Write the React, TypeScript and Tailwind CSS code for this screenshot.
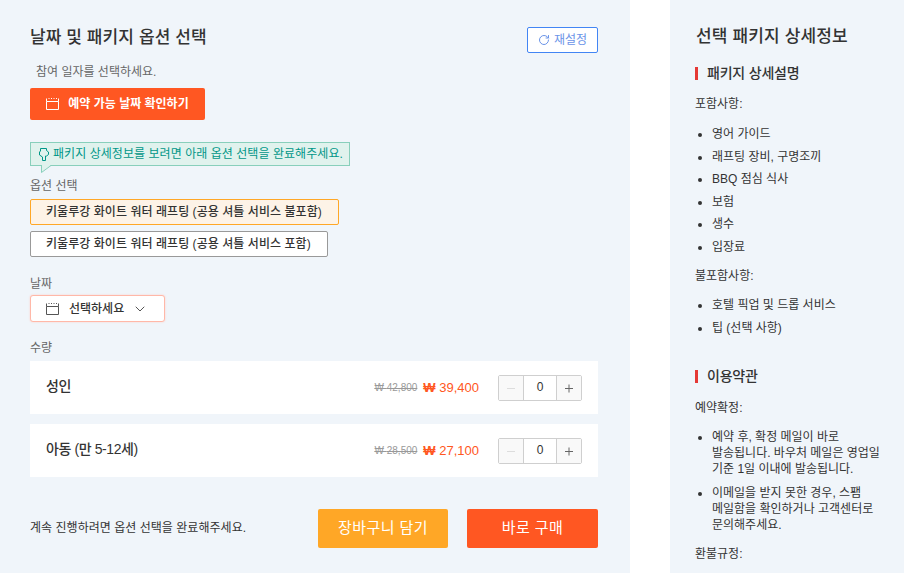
import { RotateCw, ChevronDown } from "lucide-react";

const font = "font-['Liberation_Sans','Noto_Sans_CJK_KR',sans-serif]";

function CalendarIcon({ className }: { className: string }) {
  return (
    <svg viewBox="0 0 13 12" className={className} fill="none" stroke="currentColor" strokeWidth="1">
      <path d="M0.500 3.500h12v8h-12zM0.500 3.500v-3M12.500 3.500v-3M2.500 0.500h1M5 0.500h1M7.500 0.500h1M10 0.500h1" />
    </svg>
  );
}

function HandIcon() {
  return (
    <svg viewBox="0 0 11 13" className="h-[13px] w-[11px] shrink-0" fill="none" stroke="currentColor" strokeWidth="1">
      <path d="M2.500 0.500h6v2l2 1.500v2.500l-2 1.500h-1v4.500h-3v-3.500l-3-2v-3l1-1z" />
    </svg>
  );
}

function Stepper() {
  return (
    <div className="flex h-[26px] w-[84px] rounded-[2px] border border-[#cfcfcf] text-[#666]">
      <div className="flex w-[24px] items-center justify-center bg-[#f9f9f9] text-[#ddd]">
        <svg viewBox="0 0 10 10" className="h-[10px] w-[10px]" stroke="currentColor"><path d="M1 5.500h8" /></svg>
      </div>
      <div className="flex w-[34px] items-center justify-center border-x border-[#cfcfcf] bg-white pb-[1px] text-[12px] text-[#333]">0</div>
      <div className="flex w-6 items-center justify-center bg-[#f9f9f9]">
        <svg viewBox="0 0 10 10" className="h-[10px] w-[10px]" stroke="currentColor"><path d="M1 5.500h8M5 1.500v8" /></svg>
      </div>
    </div>
  );
}

function QtyRow({ label, was, now }: { label: string; was: string; now: string }) {
  return (
    <div className="flex h-[53px] items-center justify-between bg-white px-4">
      <span className="pb-[2px] text-[14px] font-medium tracking-[-0.4px] text-[#333]">{label}</span>
      <div className="flex items-center">
        <span className="text-[10px] text-[#999] line-through">₩ {was}</span>
        <span className="ml-[6px] text-[13px] text-[#ff5722]"><b>₩</b> {now}</span>
        <div className="ml-[19px]"><Stepper /></div>
      </div>
    </div>
  );
}

function SideHeading({ children }: { children: string }) {
  return (
    <h3 className="border-l-[3px] border-[#e53935] pl-[9px] text-[14px] leading-[13px] font-medium tracking-[-0.2px] text-[#333]">{children}</h3>
  );
}

function SideList({ items }: { items: string[] }) {
  return (
    <ul className="flex list-disc flex-col gap-[3.6px] pl-[17px] text-[12px] leading-[19px] text-[#333]">
      {items.map((item) => (
        <li key={item}>{item}</li>
      ))}
    </ul>
  );
}

export default function App() {
  return (
    <div className={`${font} flex h-[573px] w-[904px] overflow-hidden bg-white`}>
      <main className="h-full w-[630px] bg-[#f0f5fa] pt-[27px] pr-8 pl-[30px]">
        <div className="flex items-start justify-between">
          <h2 className="mt-[2px] text-[17px] leading-[18px] font-medium tracking-[0.1px] text-[#333]">날짜 및 패키지 옵션 선택</h2>
          <button className="flex h-[26px] w-[71px] items-center justify-center gap-1 rounded-[2px] border border-[#4285f4] bg-white text-[12px] text-[#6b94e8]">
            <RotateCw size={12} />
            재설정
          </button>
        </div>
        <p className="mt-[11px] pl-[6px] text-[12px] leading-[16px] text-[#666]">참여 일자를 선택하세요.</p>
        <button className="mt-2 flex h-8 w-[175px] items-center justify-center gap-[9px] rounded-[2px] bg-[#ff5722] text-[12px] font-bold text-white">
          <CalendarIcon className="h-3 w-[13px]" />
          예약 가능 날짜 확인하기
        </button>

        <div className="relative mt-[22px] flex h-6 w-[320px] items-center gap-1 border border-[#88cfbb] bg-[#e0f2ed] pl-[7px] text-[12px] tracking-[0.05px] text-[#009688]">
          <HandIcon />
          패키지 상세정보를 보려면 아래 옵션 선택을 완료해주세요.
          <svg viewBox="0 0 11 8" className="absolute top-[22px] left-[10px] h-2 w-[11px]">
            <path d="M0.500 0v7.500L10 0z" fill="#e0f2ed" stroke="none" />
            <path d="M0.500 0v7.500L10 0.500" fill="none" stroke="#88cfbb" />
          </svg>
        </div>

        <p className="mt-[10px] text-[12px] leading-[20px] text-[#666]">옵션 선택</p>
        <div className="mt-[3px] flex flex-col items-start gap-[6px]">
          <div className="flex h-[26px] w-[309px] items-center rounded-[2px] border border-[#ffa726] bg-[#fdf3e7] pl-[15px] text-[12px] font-medium tracking-[0.05px] text-[#333]">
            키울루강 화이트 워터 래프팅 (공용 셔틀 서비스 불포함)
          </div>
          <div className="flex h-[26px] w-[298px] items-center rounded-[2px] border border-[#999] bg-white pl-[15px] text-[12px] font-medium tracking-[0.05px] text-[#333]">
            키울루강 화이트 워터 래프팅 (공용 셔틀 서비스 포함)
          </div>
        </div>

        <p className="mt-[17px] text-[12px] leading-[20px] text-[#666]">날짜</p>
        <button className="mt-[1px] flex h-[27px] w-[135px] items-center rounded-[3px] border border-[#ffb8a8] bg-white pl-[15px] text-[12px] font-medium text-[#333] shadow-[0_0_2px_#ffcfc4]">
          <CalendarIcon className="h-3 w-[13px] text-[#555]" />
          <span className="ml-[10px]">선택하세요</span>
          <ChevronDown size={16} strokeWidth={1.5} className="ml-2 text-[#555]" />
        </button>

        <p className="mt-4 text-[12px] leading-[20px] text-[#666]">수량</p>
        <div className="mt-[3px] flex flex-col gap-[10px]">
          <QtyRow label="성인" was="42,800" now="39,400" />
          <QtyRow label="아동 (만 5-12세)" was="28,500" now="27,100" />
        </div>

        <div className="mt-8 flex items-center">
          <p className="flex-1 pb-[2px] text-[12px] tracking-[0.03px] text-[#333]">계속 진행하려면 옵션 선택을 완료해주세요.</p>
          <button className="h-[39px] w-[130px] rounded-[2px] bg-[#ffa726] text-[15px] tracking-[0.4px] text-white">장바구니 담기</button>
          <button className="ml-[19px] h-[39px] w-[131px] rounded-[2px] bg-[#ff5722] text-[15px] tracking-[0.4px] text-white">바로 구매</button>
        </div>
      </main>

      <aside className="ml-10 h-full w-[234px] overflow-hidden bg-[#f0f5fa] pt-[27px] pl-[25px]">
        <h2 className="pl-[1px] text-[17px] leading-[20px] font-medium tracking-[0.15px] text-[#333]">선택 패키지 상세정보</h2>
        <div className="mt-5"><SideHeading>패키지 상세설명</SideHeading></div>
        <p className="mt-4 text-[12px] leading-[16px] text-[#333]">포함사항:</p>
        <div className="mt-[13px]">
          <SideList items={["영어 가이드", "래프팅 장비, 구명조끼", "BBQ 점심 식사", "보험", "생수", "입장료"]} />
        </div>
        <p className="mt-[11px] text-[12px] leading-[16px] text-[#333]">불포함사항:</p>
        <div className="mt-3">
          <SideList items={["호텔 픽업 및 드롭 서비스", "팁 (선택 사항)"]} />
        </div>
        <div className="mt-8"><SideHeading>이용약관</SideHeading></div>
        <p className="mt-[17px] text-[12px] leading-[16px] text-[#333]">예약확정:</p>
        <ul className="mt-[13px] flex w-[190px] list-disc flex-col gap-2 pl-[17px] text-[12px] leading-[16px] break-keep text-[#333]">
          <li>예약 후, 확정 메일이 바로 발송됩니다. 바우처 메일은 영업일 기준 1일 이내에 발송됩니다.</li>
          <li>이메일을 받지 못한 경우, 스팸 메일함을 확인하거나 고객센터로 문의해주세요.</li>
        </ul>
        <p className="mt-[13px] text-[12px] leading-[16px] text-[#333]">환불규정:</p>
      </aside>
    </div>
  );
}
